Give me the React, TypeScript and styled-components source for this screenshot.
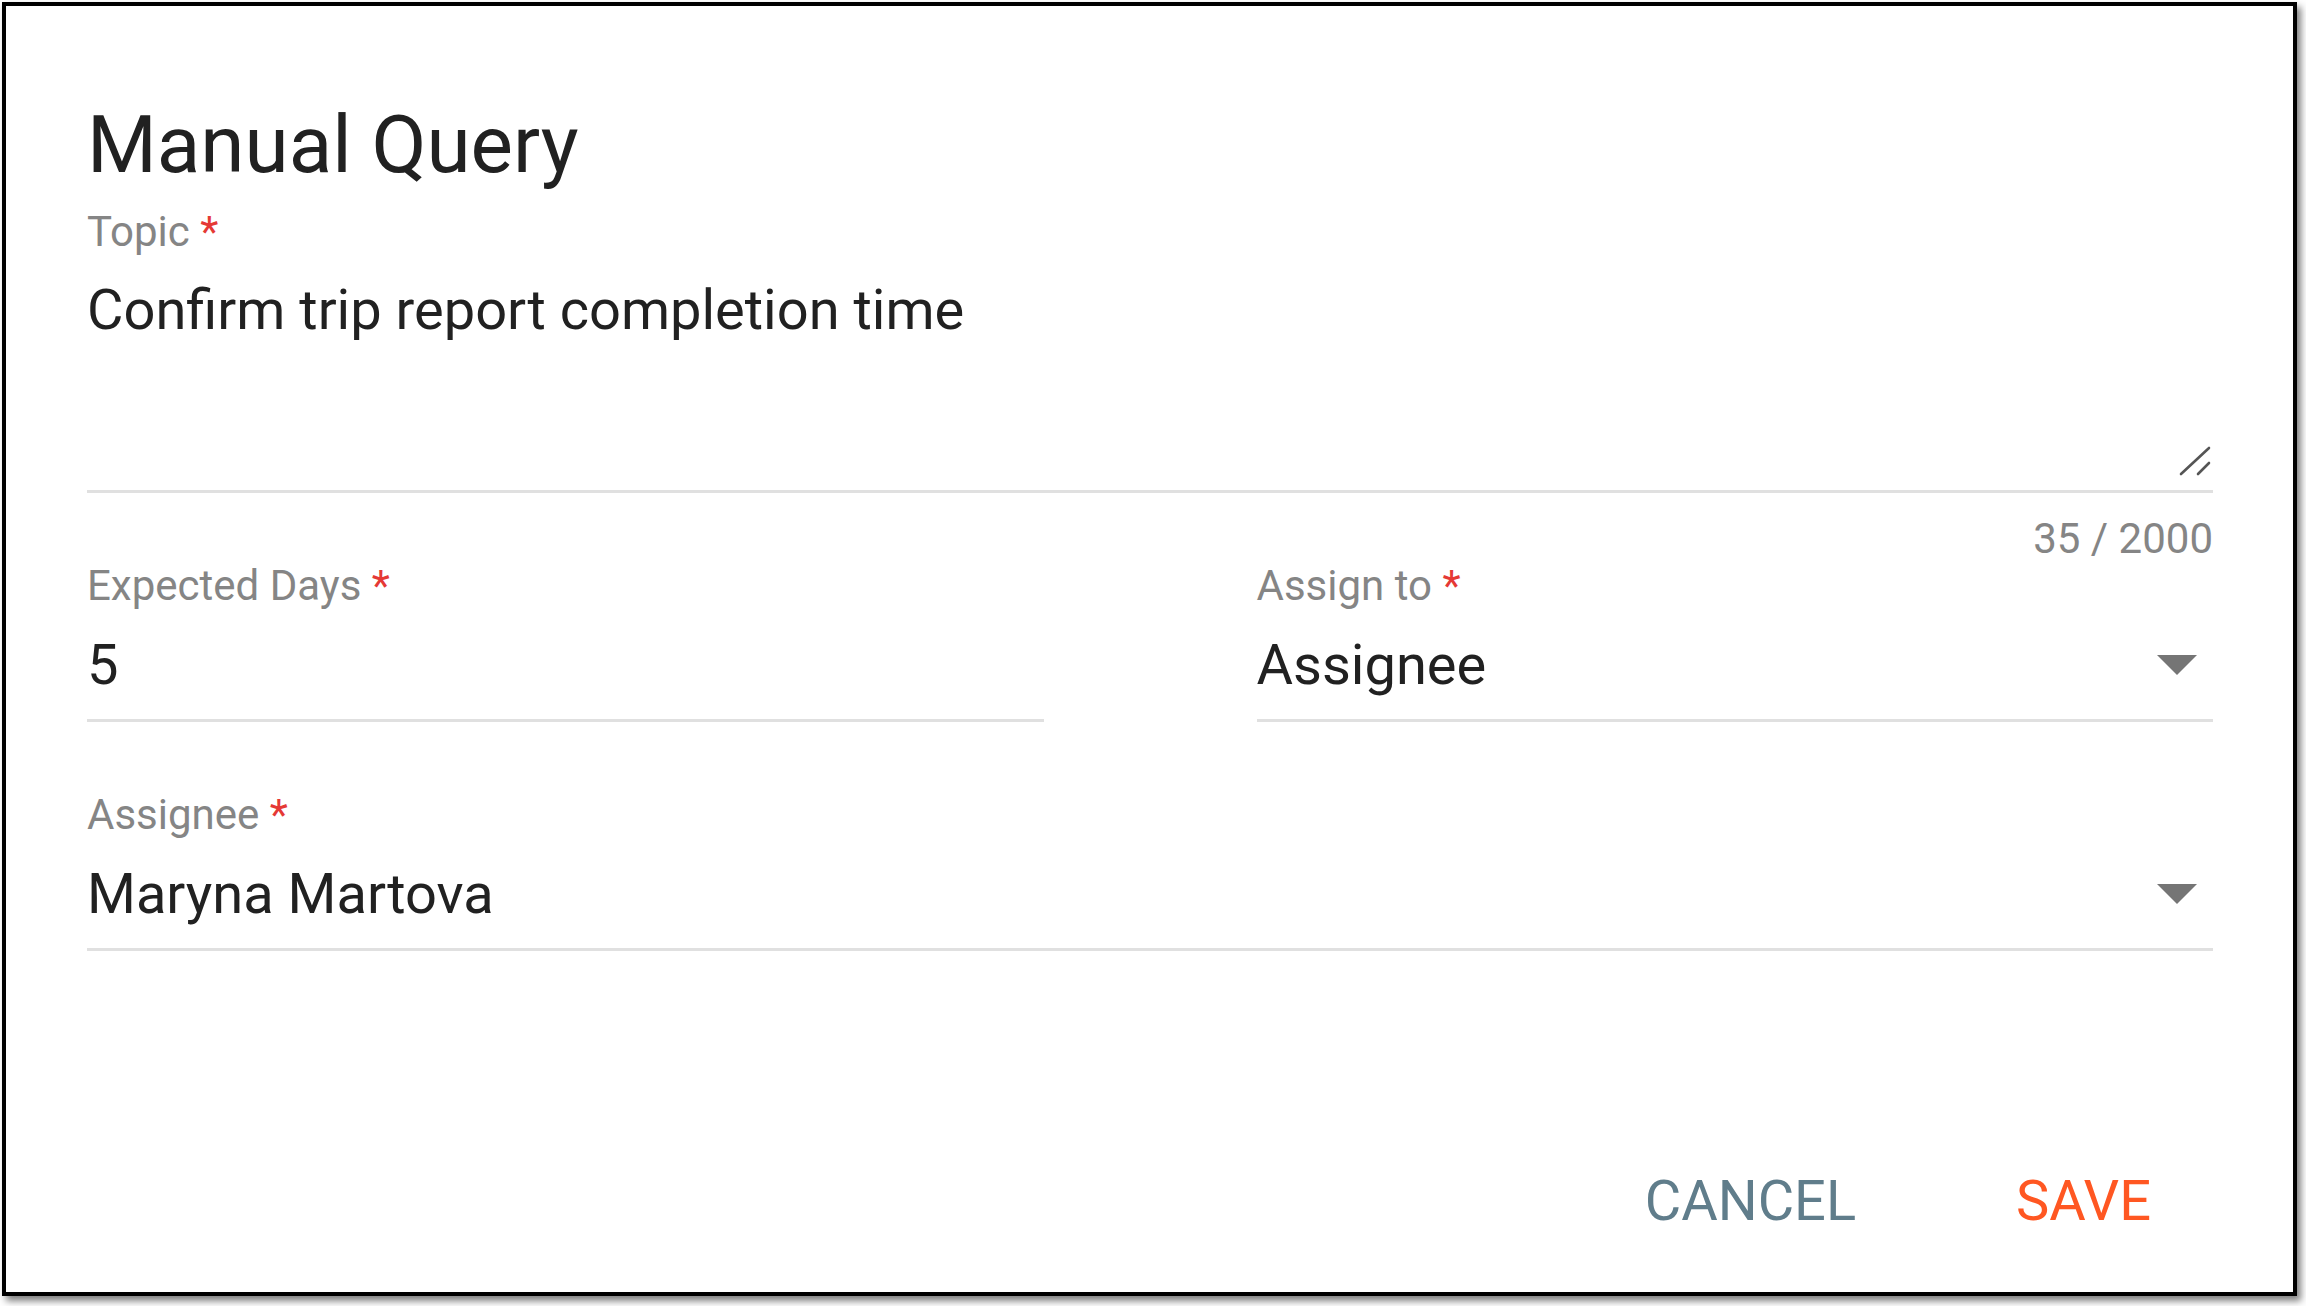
import styled, { createGlobalStyle } from "styled-components";

const GlobalStyle = createGlobalStyle`
  html, body {
    margin: 0;
    padding: 0;
    background: #ffffff;
  }
  body {
    font-family: Roboto, "Liberation Sans", sans-serif;
    color: #212121;
  }
`;

const Page = styled.div`
  padding: 2px;
  width: 2306px;
  height: 1306px;
  box-sizing: border-box;
`;

const Dialog = styled.div`
  width: 2295px;
  height: 1294px;
  box-sizing: border-box;
  border: 4px solid #000;
  background: #fff;
  box-shadow: 4px 5px 7px rgba(0, 0, 0, 0.5);
  display: flex;
  flex-direction: column;
  padding: 91px 80px 58px 81px;
`;

const Title = styled.h2`
  margin: 0;
  font-size: 80px;
  line-height: 96px;
  font-weight: 400;
  color: #212121;
`;

const Field = styled.div<{ $top?: number }>`
  display: flex;
  flex-direction: column;
  margin-top: ${(p) => p.$top ?? 0}px;
`;

const Label = styled.label`
  font-size: 42px;
  line-height: 46px;
  color: #858585;
`;

const Required = styled.span`
  color: #e53935;
`;

const TextBox = styled.div`
  position: relative;
  margin-top: 22px;
  height: 213px;
  border-bottom: 3px solid #e0e0e0;
  font-size: 56px;
  line-height: 66px;
  color: #212121;
`;

const ResizeHandle = styled.svg`
  position: absolute;
  right: 2px;
  bottom: 14px;
`;

const Counter = styled.div`
  margin-top: 23px;
  text-align: right;
  font-size: 42px;
  line-height: 46px;
  color: #858585;
`;

const Row = styled.div`
  display: grid;
  grid-template-columns: 1fr 1fr;
  column-gap: 213px;
`;

const ValueLine = styled.div`
  margin-top: 23px;
  padding-bottom: 21px;
  border-bottom: 3px solid #e0e0e0;
  display: flex;
  align-items: center;
  justify-content: space-between;
  font-size: 56px;
  line-height: 66px;
  color: #212121;
`;

const Arrow = styled.span`
  width: 0;
  height: 0;
  margin-right: 16px;
  border-left: 20px solid transparent;
  border-right: 20px solid transparent;
  border-top: 20px solid #757575;
`;

const Actions = styled.div`
  margin-top: auto;
  display: flex;
  justify-content: flex-end;
  gap: 96px;
  padding-right: 30px;
`;

const Button = styled.button<{ $primary?: boolean }>`
  background: none;
  border: none;
  padding: 0 32px;
  font-family: Roboto, "Liberation Sans", sans-serif;
  font-size: 56px;
  line-height: 66px;
  font-weight: 400;
  text-transform: uppercase;
  color: ${(p) => (p.$primary ? "#ff5722" : "#607d8b")};
  cursor: pointer;
`;

function RequiredLabel({ text }: { text: string }) {
  return (
    <Label>
      {text} <Required>*</Required>
    </Label>
  );
}

export default function App() {
  return (
    <Page>
      <GlobalStyle />
      <Dialog>
        <Title>Manual Query</Title>

        <Field $top={16}>
          <RequiredLabel text="Topic" />
          <TextBox>
            Confirm trip report completion time
            <ResizeHandle width="32" height="30" viewBox="0 0 32 30">
              <path
                d="M2 28 L30 2 M19 28 L30 17"
                stroke="#555"
                strokeWidth="2.6"
                strokeLinecap="round"
                fill="none"
              />
            </ResizeHandle>
          </TextBox>
        </Field>
        <Counter>35 / 2000</Counter>

        <Row>
          <Field $top={1}>
            <RequiredLabel text="Expected Days" />
            <ValueLine>5</ValueLine>
          </Field>
          <Field $top={1}>
            <RequiredLabel text="Assign to" />
            <ValueLine>
              Assignee
              <Arrow />
            </ValueLine>
          </Field>
        </Row>

        <Field $top={70}>
          <RequiredLabel text="Assignee" />
          <ValueLine>
            Maryna Martova
            <Arrow />
          </ValueLine>
        </Field>

        <Actions>
          <Button>Cancel</Button>
          <Button $primary>Save</Button>
        </Actions>
      </Dialog>
    </Page>
  );
}
